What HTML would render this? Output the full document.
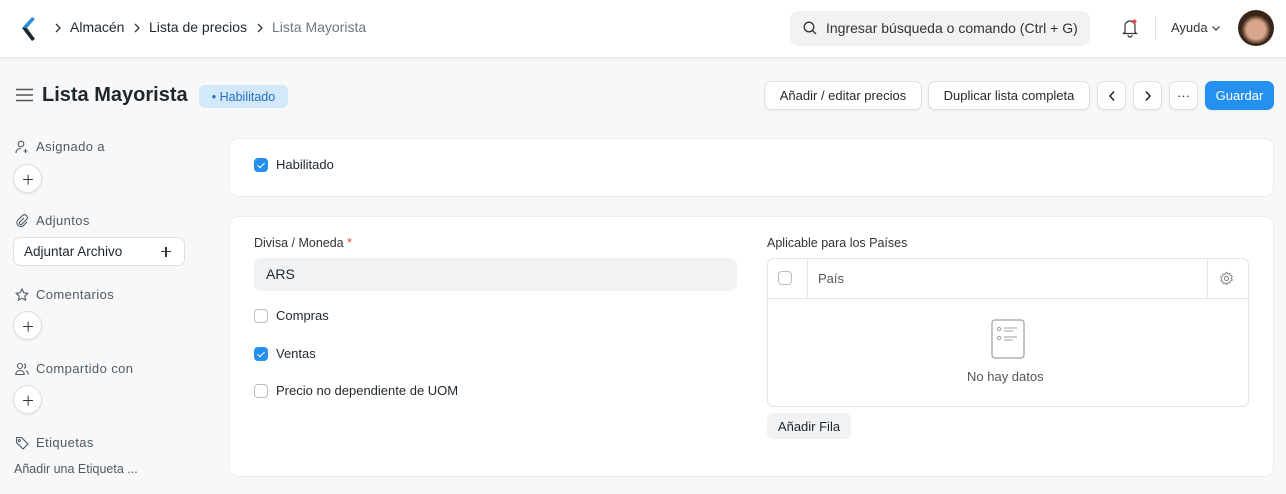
<!DOCTYPE html>
<html><head><meta charset="utf-8"><style>
*{box-sizing:border-box;margin:0;padding:0}
body{width:1286px;height:494px;overflow:hidden;background:#f8f8f8;font-family:"Liberation Sans",sans-serif;color:#1f272e;position:relative;font-size:13px}
.a{position:absolute}
.nav{left:0;top:0;width:1286px;height:58px;background:#fff;border-bottom:1px solid #e6e8ea;box-shadow:0 1px 3px rgba(0,0,0,.04)}
.btn{position:absolute;top:81px;height:29px;background:#fff;border:1px solid #dcdfe3;border-radius:7px;font-size:13px;display:flex;align-items:center;justify-content:center;color:#1f272e;box-shadow:0 1px 2px rgba(0,0,0,.05)}
.card{position:absolute;left:229px;width:1045px;background:#fff;border:1px solid #ebedef;border-radius:9px}
.lbl{position:absolute;left:15px;font-size:13px;color:#4c5a67;letter-spacing:.4px;display:flex;align-items:center;gap:7px}
.plus{position:absolute;left:13px;width:29px;height:29px;border-radius:50%;background:#fff;border:1px solid #dcdfe3;box-shadow:0 1px 2px rgba(0,0,0,.08)}
.plus::before,.plus::after{content:"";position:absolute;left:9px;top:13.5px;width:10px;height:1.3px;background:#333}
.plus::after{transform:rotate(90deg)}
.cb{position:absolute;width:14px;height:14px;border-radius:4px;border:1px solid #b8bec4;background:#fff}
.cb.on{background:#2490ef;border-color:#2490ef}
.cb.on::after{content:"";position:absolute;left:4px;top:1.5px;width:3px;height:6px;border:solid #fff;border-width:0 1.6px 1.6px 0;transform:rotate(45deg)}
.t{position:absolute;font-size:13px;color:#1f272e}
</style></head><body>
<div class="a nav"></div>
<svg class="a" style="left:18px;top:16px" width="18" height="26" viewBox="0 0 18 26"><path d="M14 1 L4 12 L9 12 L17 3Z" fill="#2f8bd1"/><path d="M4 12 L14 25 L17 23 L9 12Z" fill="#1f272e"/></svg>
<svg class="a" style="left:54px;top:23px" width="8" height="10" viewBox="0 0 8 10"><path d="M2 1l4 4-4 4" fill="none" stroke="#333" stroke-width="1.3"/></svg>
<div class="t" style="left:70px;top:19px;font-size:14px">Almacén</div>
<svg class="a" style="left:133px;top:23px" width="8" height="10" viewBox="0 0 8 10"><path d="M2 1l4 4-4 4" fill="none" stroke="#333" stroke-width="1.3"/></svg>
<div class="t" style="left:149px;top:19px;font-size:14px">Lista de precios</div>
<svg class="a" style="left:256px;top:23px" width="8" height="10" viewBox="0 0 8 10"><path d="M2 1l4 4-4 4" fill="none" stroke="#333" stroke-width="1.3"/></svg>
<div class="t" style="left:272px;top:19px;font-size:14px;color:#6c7680">Lista Mayorista</div>
<div class="a" style="left:790px;top:11px;width:300px;height:35px;background:#f1f2f3;border-radius:8px"></div>
<svg class="a" style="left:803px;top:21px" width="14" height="14" viewBox="0 0 14 14"><circle cx="6" cy="6" r="4.8" fill="none" stroke="#333" stroke-width="1.3"/><path d="M9.5 9.5L13 13" stroke="#333" stroke-width="1.3"/></svg>
<div class="t" style="left:826px;top:20px;font-size:14px;color:#333">Ingresar búsqueda o comando (Ctrl + G)</div>
<svg class="a" style="left:1121px;top:18px" width="18" height="20" viewBox="0 0 18 20"><path d="M4 14 V8 a5 5 0 0 1 10 0 V14 L15.5 15.5 H2.5Z M7 17 a2 2 0 0 0 4 0" fill="none" stroke="#333" stroke-width="1.2"/><circle cx="13.5" cy="3.5" r="2" fill="#e24c4c"/></svg>
<div class="a" style="left:1155px;top:16px;width:1px;height:24px;background:#e2e4e6"></div>
<div class="t" style="left:1171px;top:20px;color:#333">Ayuda</div>
<svg class="a" style="left:1211px;top:25px" width="10" height="7" viewBox="0 0 10 7"><path d="M1.5 1.5l3.5 3.5 3.5-3.5" fill="none" stroke="#333" stroke-width="1.2"/></svg>
<div class="a" style="left:1238px;top:10px;width:36px;height:36px;border-radius:50%;background:radial-gradient(circle at 50% 55%,#d9a58a 0 35%,#3a2418 55%)"></div>
<svg class="a" style="left:16px;top:88px" width="17" height="14" viewBox="0 0 17 14"><path d="M0 1.5H17M0 7H17M0 12.5H17" stroke="#555" stroke-width="1.4"/></svg>
<div class="t" style="left:42px;top:84px;font-size:20px;font-weight:bold">Lista Mayorista</div>
<div class="a" style="left:199px;top:85px;width:89px;height:23px;background:#d3e8fb;border-radius:6px;color:#2370c0;font-size:12.5px;display:flex;align-items:center;justify-content:center">• Habilitado</div>
<div class="btn" style="left:764px;width:158px">Añadir / editar precios</div>
<div class="btn" style="left:928px;width:162px">Duplicar lista completa</div>
<div class="btn" style="left:1097px;width:29px"><svg width="8" height="12" viewBox="0 0 8 12"><path d="M6 1.5L2 6l4 4.5" fill="none" stroke="#222" stroke-width="1.5"/></svg></div>
<div class="btn" style="left:1133px;width:29px"><svg width="8" height="12" viewBox="0 0 8 12"><path d="M2 1.5L6 6l-4 4.5" fill="none" stroke="#222" stroke-width="1.5"/></svg></div>
<div class="btn" style="left:1169px;width:29px">···</div>
<div class="btn" style="left:1205px;width:69px;background:#2490ef;border-color:#2490ef;color:#fff">Guardar</div>

<div class="lbl" style="top:139px"><svg width="14" height="14" viewBox="0 0 14 14" fill="none" stroke="#4c5a67" stroke-width="1.1"><circle cx="6" cy="4" r="2.8"/><path d="M1 13c0-3 2.2-4.5 5-4.5M10.5 9v4M8.5 11h4"/></svg>Asignado a</div>
<div class="plus" style="top:164px"></div>
<div class="lbl" style="top:213px"><svg width="14" height="14" viewBox="0 0 14 14" fill="none" stroke="#4c5a67" stroke-width="1.1"><path d="M9 4L4.5 8.5a1.5 1.5 0 0 0 2 2L12 5a3 3 0 0 0-4-4L2.5 6.5a4 4 0 0 0 5.5 5.5L12 8"/></svg>Adjuntos</div>
<div class="a" style="left:13px;top:237px;width:172px;height:29px;background:#fff;border:1px solid #dcdfe3;border-radius:7px;font-size:13.5px;padding:6px 10px;">Adjuntar Archivo</div>
<div class="a" style="left:161px;top:251px;width:10px;height:1.3px;background:#333"></div><div class="a" style="left:165.4px;top:246.5px;width:1.3px;height:10px;background:#333"></div>
<div class="lbl" style="top:287px"><svg width="14" height="14" viewBox="0 0 14 14" fill="none" stroke="#4c5a67" stroke-width="1.1"><path d="M7 1l1.8 3.8 4 .5-3 2.8.8 4L7 10.2 3.4 12.1l.8-4-3-2.8 4-.5z"/></svg>Comentarios</div>
<div class="plus" style="top:311px"></div>
<div class="lbl" style="top:361px"><svg width="14" height="14" viewBox="0 0 14 14" fill="none" stroke="#4c5a67" stroke-width="1.1"><circle cx="5" cy="4" r="2.5"/><path d="M0.8 12.5c0-2.5 1.8-4 4.2-4s4.2 1.5 4.2 4H.8zM9 1.8a2.5 2.5 0 0 1 0 4.6M11 8.8c1.3.6 2.2 1.9 2.2 3.7"/></svg>Compartido con</div>
<div class="plus" style="top:385px"></div>
<div class="lbl" style="top:435px"><svg width="14" height="14" viewBox="0 0 14 14" fill="none" stroke="#4c5a67" stroke-width="1.1"><path d="M1 1.5h5.5L13 8l-5 5-6.5-6.5V1.5z"/><circle cx="4.3" cy="4.5" r="1"/></svg>Etiquetas</div>
<div class="t" style="left:14px;top:462px;font-size:12.5px;color:#4c5a67">Añadir una Etiqueta ...</div>

<div class="card" style="top:138px;height:59px"></div>
<div class="cb on" style="left:254px;top:158px"></div>
<div class="t" style="left:276px;top:157px">Habilitado</div>
<div class="card" style="top:216px;height:261px"></div>
<div class="t" style="left:254px;top:236px;color:#333;font-size:12.5px">Divisa / Moneda <span style="color:#e24c4c">*</span></div>
<div class="a" style="left:254px;top:258px;width:483px;height:33px;background:#f1f2f3;border-radius:7px;font-size:14px;padding:8px 12px;color:#1f272e">ARS</div>
<div class="cb" style="left:254px;top:309px"></div><div class="t" style="left:276px;top:308px">Compras</div>
<div class="cb on" style="left:254px;top:347px"></div><div class="t" style="left:276px;top:346px">Ventas</div>
<div class="cb" style="left:254px;top:384px"></div><div class="t" style="left:276px;top:383px">Precio no dependiente de UOM</div>
<div class="t" style="left:767px;top:236px;color:#333;font-size:12.5px">Aplicable para los Países</div>
<div class="a" style="left:767px;top:258px;width:482px;height:149px;border:1px solid #e2e4e6;border-radius:7px"></div>
<div class="a" style="left:768px;top:298px;width:480px;height:1px;background:#e2e4e6"></div>
<div class="a" style="left:807px;top:259px;width:1px;height:39px;background:#e2e4e6"></div>
<div class="a" style="left:1207px;top:259px;width:1px;height:39px;background:#e2e4e6"></div>
<div class="cb" style="left:778px;top:271px"></div>
<div class="t" style="left:818px;top:271px;color:#555">País</div>
<svg class="a" style="left:1219px;top:271px" width="15" height="15" viewBox="0 0 16 16" fill="none" stroke="#888" stroke-width="1.1"><path d="M8 1.5l1.5 1.6 2.1-.4.5 2.1 2 .9-.9 2 .9 2-2 .9-.5 2.1-2.1-.4L8 14.5l-1.5-1.6-2.1.4-.5-2.1-2-.9.9-2-.9-2 2-.9.5-2.1 2.1.4z"/><circle cx="8" cy="8" r="2.2"/></svg>
<svg class="a" style="left:991px;top:319px" width="34" height="40" viewBox="0 0 34 40"><rect x="1" y="1" width="32" height="38" rx="3" fill="none" stroke="#9aa1a8" stroke-width="1.2"/><circle cx="8" cy="10" r="1.6" fill="none" stroke="#9aa1a8"/><circle cx="8" cy="19" r="1.6" fill="none" stroke="#9aa1a8"/><path d="M13 9H26M13 12H22M13 18H26M13 21H22" stroke="#9aa1a8"/></svg>
<div class="t" style="left:967px;top:369px;color:#555">No hay datos</div>
<div class="a" style="left:767px;top:413px;width:84px;height:26px;background:#f1f2f3;border-radius:6px;font-size:13px;display:flex;align-items:center;justify-content:center">Añadir Fila</div>
</body></html>
